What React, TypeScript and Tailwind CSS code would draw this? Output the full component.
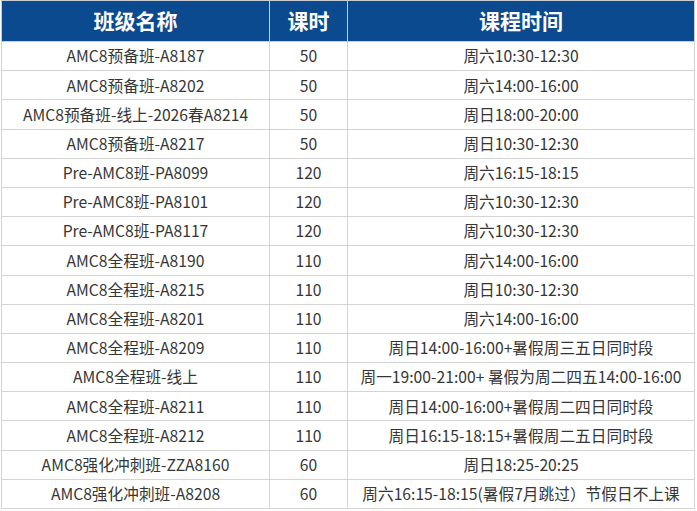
import React from 'react';

const rows: [string, string, string][] = [
  ['AMC8预备班-A8187', '50', '周六10:30-12:30'],
  ['AMC8预备班-A8202', '50', '周六14:00-16:00'],
  ['AMC8预备班-线上-2026春A8214', '50', '周日18:00-20:00'],
  ['AMC8预备班-A8217', '50', '周日10:30-12:30'],
  ['Pre-AMC8班-PA8099', '120', '周六16:15-18:15'],
  ['Pre-AMC8班-PA8101', '120', '周六10:30-12:30'],
  ['Pre-AMC8班-PA8117', '120', '周六10:30-12:30'],
  ['AMC8全程班-A8190', '110', '周六14:00-16:00'],
  ['AMC8全程班-A8215', '110', '周日10:30-12:30'],
  ['AMC8全程班-A8201', '110', '周六14:00-16:00'],
  ['AMC8全程班-A8209', '110', '周日14:00-16:00+暑假周三五日同时段'],
  ['AMC8全程班-线上', '110', '周一19:00-21:00+ 暑假为周二四五14:00-16:00'],
  ['AMC8全程班-A8211', '110', '周日14:00-16:00+暑假周二四日同时段'],
  ['AMC8全程班-A8212', '110', '周日16:15-18:15+暑假周二五日同时段'],
  ['AMC8强化冲刺班-ZZA8160', '60', '周日18:25-20:25'],
  ['AMC8强化冲刺班-A8208', '60', '周六16:15-18:15(暑假7月跳过）节假日不上课'],
];

export default function App() {
  return (
    <div
      className="w-[697px] h-[511px] bg-white overflow-hidden"
      style={{ fontFamily: '"Noto Sans CJK SC", "Noto Sans", sans-serif' }}
    >
      <table className="ml-px w-[694px] border-collapse table-fixed text-center">
        <colgroup>
          <col className="w-[268px]" />
          <col className="w-[78px]" />
          <col />
        </colgroup>
        <thead>
          <tr className="h-[41px] bg-[#0b4a8f] text-white text-[21px] font-bold">
            <th className="border border-[#c9cdd3] p-0">班级名称</th>
            <th className="border border-[#c9cdd3] p-0">课时</th>
            <th className="border border-[#c9cdd3] p-0">课程时间</th>
          </tr>
        </thead>
        <tbody className="text-[15.7px] text-[#363636]">
          {rows.map(([name, hours, time], i) => (
            <tr key={i} className="h-[29.2px]">
              <td className="border border-[#d4d4d4] p-0 whitespace-nowrap">{name}</td>
              <td className="border border-[#d4d4d4] p-0">{hours}</td>
              <td className="border border-[#d4d4d4] p-0 whitespace-nowrap">{time}</td>
            </tr>
          ))}
        </tbody>
      </table>
    </div>
  );
}
